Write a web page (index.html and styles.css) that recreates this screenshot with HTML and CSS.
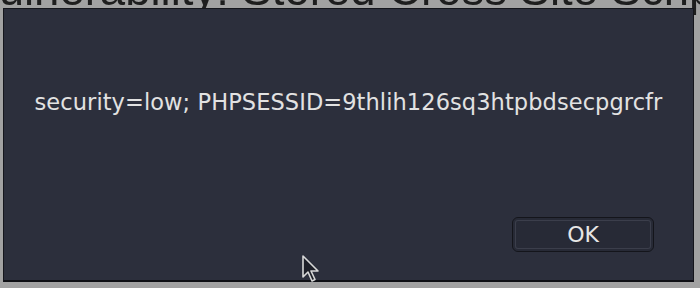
FILE: index.html
```html
<!DOCTYPE html>
<html>
<head>
<meta charset="utf-8">
<link rel="stylesheet" href="styles.css">
</head>
<body>
<div class="page">
  <h1 class="heading">Vulnerability: Stored Cross Site Scripting</h1>
</div>
<div class="dialog">
  <div class="message">security=low; PHPSESSID=9thlih126sq3htpbdsecpgrcfr</div>
  <div class="actions">
    <button class="ok">OK</button>
  </div>
</div>
<svg class="cursor" width="20" height="30" viewBox="0 0 20 30">
  <path d="M2 1 L2 22 L7 17 L11 26 L14 24.5 L10 16 L17 16 Z" fill="#1d1f28" stroke="#d8d8d8" stroke-width="1.6" stroke-linejoin="round"/>
</svg>
</body>
</html>
```
FILE: styles.css
```css
html, body {
  margin: 0;
  padding: 0;
  width: 700px;
  height: 288px;
  overflow: hidden;
  background: #a2a2a2;
}
.page {
  position: relative;
  height: 288px;
}
.heading {
  margin: 0;
  margin-top: -36px;
  margin-left: -30px;
  white-space: nowrap;
  font-family: "Liberation Sans", Arial, sans-serif;
  font-weight: normal;
  font-size: 45.5px;
  line-height: 52px;
  color: #1e1e1e;
  filter: blur(0.6px);
}
.dialog {
  position: absolute;
  left: 3px;
  top: 8px;
  width: 689px;
  height: 271px;
  background: #2c2f3c;
  border: 1px solid #15161c;
  border-bottom: 2px solid #0e0f14;
  display: flex;
  flex-direction: column;
  box-sizing: content-box;
}
.message {
  margin-top: 80px;
  text-align: center;
  font-family: "DejaVu Sans", sans-serif;
  font-size: 22.5px;
  line-height: 26px;
  color: #e2e2e2;
  letter-spacing: 0.08px;
}
.actions {
  margin-top: auto;
  margin-bottom: 28px;
  display: flex;
  justify-content: flex-end;
  padding-right: 39px;
}
.ok {
  width: 142px;
  height: 35px;
  border-radius: 6px;
  background: #272a36;
  border: 1px solid #14151b;
  box-shadow: inset 0 0 0 2px #272a36, inset 0 0 0 3px #3b3e4b;
  color: #e6e6e6;
  font-family: "DejaVu Sans", sans-serif;
  font-size: 22px;
  padding: 0;
}
.cursor {
  position: absolute;
  left: 301px;
  top: 255px;
}
```
